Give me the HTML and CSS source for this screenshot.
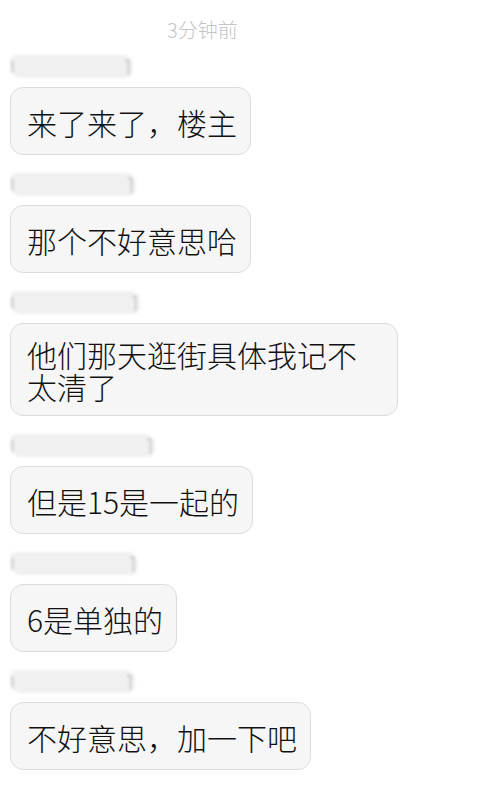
FILE: index.html
```html
<!DOCTYPE html>
<html lang="zh-CN">
<head>
<meta charset="utf-8">
<title>聊天</title>
<link rel="stylesheet" href="styles.css">
</head>
<body>
<div class="chat">
  <div class="time">3分钟前</div>

  <div class="msg">
    <div class="name"><span class="smudge" style="width:123px"></span></div>
    <div class="bubble">来了来了，楼主</div>
  </div>

  <div class="msg">
    <div class="name"><span class="smudge" style="width:126px"></span></div>
    <div class="bubble">那个不好意思哈</div>
  </div>

  <div class="msg">
    <div class="name"><span class="smudge" style="width:130px"></span></div>
    <div class="bubble bubble-multi">他们那天逛街具体我记不太清了</div>
  </div>

  <div class="msg">
    <div class="name"><span class="smudge" style="width:145px"></span></div>
    <div class="bubble">但是15是一起的</div>
  </div>

  <div class="msg">
    <div class="name"><span class="smudge" style="width:128px"></span></div>
    <div class="bubble">6是单独的</div>
  </div>

  <div class="msg">
    <div class="name"><span class="smudge" style="width:125px"></span></div>
    <div class="bubble">不好意思，加一下吧</div>
  </div>
</div>
</body>
</html>
```

FILE: styles.css
```css
html, body {
  margin: 0;
  padding: 0;
  background: #ffffff;
}

body {
  width: 500px;
  height: 797px;
  overflow: hidden;
  font-family: "Noto Sans CJK SC", "Noto Sans", sans-serif;
}

.chat {
  padding: 0 10px;
}

.time {
  box-sizing: border-box;
  height: 50px;
  padding-top: 8px;
  padding-left: 157px;
  display: flex;
  align-items: center;
  font-size: 20px;
  font-weight: 300;
  color: #c4c4c4;
}

.msg {
  margin-bottom: 13px;
}

.name {
  height: 37px;
  display: flex;
  align-items: flex-start;
}

.smudge {
  display: block;
  margin-top: 5px;
  height: 23px;
  background: #f0f0f0;
  border-radius: 6px 10px 8px 12px;
  filter: blur(1.5px);
  position: relative;
}

.smudge::before {
  content: "";
  position: absolute;
  left: 2px;
  top: 6px;
  width: 1px;
  height: 12px;
  background: #a8a8a8;
}

.smudge::after {
  content: "";
  position: absolute;
  right: 4px;
  top: 5px;
  width: 3px;
  height: 14px;
  border-top: 1px solid #a8a8a8;
  border-right: 1px solid #a8a8a8;
}

.bubble {
  display: inline-block;
  box-sizing: border-box;
  max-width: 388px;
  padding: 18px 13px 16px 16px;
  font-size: 30px;
  font-weight: 300;
  line-height: 32px;
  color: #111111;
  background: #f6f6f6;
  border: 1px solid #dcdcdc;
  border-radius: 13px;
}

.bubble-multi {
  padding-top: 14px;
  padding-bottom: 13px;
}
```
